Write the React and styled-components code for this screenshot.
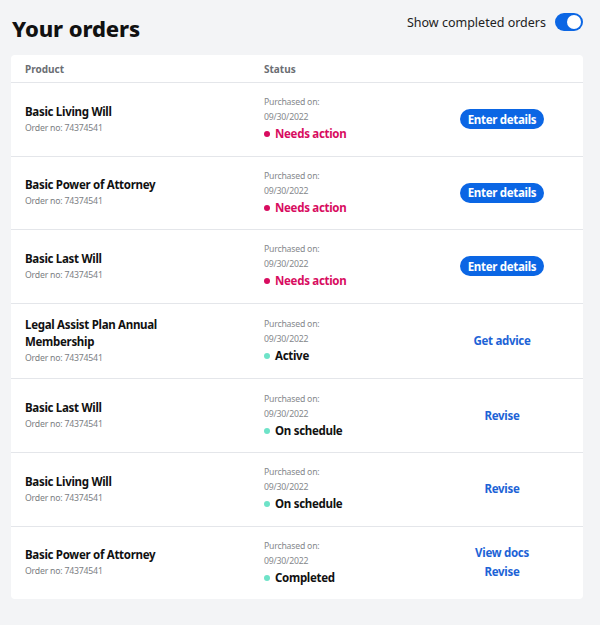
import styled, { createGlobalStyle } from "styled-components"

const orders = [
    { name: "Basic Living Will", status: "action", actions: ["Enter details"] },
    { name: "Basic Power of Attorney", status: "action", actions: ["Enter details"] },
    { name: "Basic Last Will", status: "action", actions: ["Enter details"] },
    { name: "Legal Assist Plan Annual Membership", status: "active", actions: ["Get advice"] },
    { name: "Basic Last Will", status: "schedule", actions: ["Revise"] },
    { name: "Basic Living Will", status: "schedule", actions: ["Revise"] },
    { name: "Basic Power of Attorney", status: "completed", actions: ["View docs", "Revise"] },
]

const statusLabel = {
    action: "Needs action",
    active: "Active",
    schedule: "On schedule",
    completed: "Completed",
}

const App = () => {
    return (
        <Page>
            <GlobalStyle />
            <TopBar>
                <Title>Your orders</Title>
                <ToggleWrap>
                    <ToggleLabel>Show completed orders</ToggleLabel>
                    <Toggle $on />
                </ToggleWrap>
            </TopBar>

            <Card>
                <HeadRow>
                    <HeadCell>Product</HeadCell>
                    <HeadCell>Status</HeadCell>
                    <span />
                </HeadRow>
                {orders.map((o, i) => (
                    <Row key={i}>
                        <ProductCell>
                            <ProductName>{o.name}</ProductName>
                            <OrderNo>Order no: 74374541</OrderNo>
                        </ProductCell>
                        <StatusCell>
                            <Muted>Purchased on:</Muted>
                            <Muted>09/30/2022</Muted>
                            <StatusLine $warn={o.status === "action"}>
                                <Dot $warn={o.status === "action"} />
                                {statusLabel[o.status]}
                            </StatusLine>
                        </StatusCell>
                        <ActionCell>
                            {o.status === "action"
                                ? <PillButton>{o.actions[0]}</PillButton>
                                : o.actions.map((a) => <LinkButton key={a}>{a}</LinkButton>)}
                        </ActionCell>
                    </Row>
                ))}
            </Card>
        </Page>
    )
}

//styling starts----------------------------------------
const Blue = "#0b66e4"
const LinkBlue = "#1d63d6"
const Pink = "#d80c5f"
const Mint = "#6ee3c8"

const GlobalStyle = createGlobalStyle`
body {
    margin: 0;
    background: #f3f4f6;
    font-family: "Noto Sans", "Open Sans", sans-serif;
    color: #111;
}
`

const Page = styled.div`
padding: 13px 17px 25px 11px;
min-height: 625px;
box-sizing: border-box;
`

const TopBar = styled.div`
display: flex;
justify-content: space-between;
align-items: flex-start;
height: 42px;
`

const Title = styled.h1`
margin: 0 0 0 1px;
font-size: 22px;
font-weight: 800;
line-height: 31px;
letter-spacing: -0.1px;
`

const ToggleWrap = styled.div`
display: flex;
align-items: center;
gap: 9px;
height: 18px;
`

const ToggleLabel = styled.span`
font-size: 12.5px;
color: #222;
`

const Toggle = styled.span`
position: relative;
width: 28px;
height: 18px;
border-radius: 9px;
background: ${Blue};
&::after {
    content: "";
    position: absolute;
    top: 2px;
    left: ${p => (p.$on ? "12px" : "2px")};
    width: 14px;
    height: 14px;
    border-radius: 50%;
    background: white;
}
`

const Card = styled.div`
background: white;
border-radius: 4px;
overflow: hidden;
`

const cols = `
display: grid;
grid-template-columns: 239px 171px 1fr;
padding: 0 14px;
`

const HeadRow = styled.div`
${cols}
height: 27px;
align-items: center;
border-bottom: 1px solid #e4e6ea;
`

const HeadCell = styled.div`
font-size: 10px;
font-weight: 700;
color: #6b6e73;
`

const Row = styled.div`
${cols}
padding-top: 12.3px;
padding-bottom: 12.3px;
align-items: center;
border-bottom: 1px solid #e4e6ea;
&:last-child {
    border-bottom: none;
}
`

const ProductCell = styled.div`
display: flex;
flex-direction: column;
max-width: 165px;
`

const ProductName = styled.div`
font-size: 11.5px;
font-weight: 700;
line-height: 17px;
letter-spacing: -0.3px;
`

const OrderNo = styled.div`
font-size: 8.7px;
line-height: 16px;
color: #7b7e83;
letter-spacing: -0.2px;
`

const StatusCell = styled.div`
display: flex;
flex-direction: column;
`

const Muted = styled.div`
font-size: 8.7px;
line-height: 15px;
color: #85888c;
letter-spacing: -0.2px;
`

const StatusLine = styled.div`
display: flex;
align-items: center;
gap: 5px;
font-size: 11.5px;
font-weight: 700;
line-height: 18px;
letter-spacing: -0.3px;
color: ${p => (p.$warn ? Pink : "#111")};
`

const Dot = styled.span`
width: 6px;
height: 6px;
border-radius: 50%;
background: ${p => (p.$warn ? Pink : Mint)};
`

const ActionCell = styled.div`
display: flex;
flex-direction: column;
align-items: center;
gap: 1px;
`

const PillButton = styled.button`
border: none;
background: ${Blue};
color: white;
font-family: inherit;
font-size: 11.5px;
font-weight: 700;
letter-spacing: -0.3px;
height: 20px;
padding: 0 8px;
border-radius: 10px;
`

const LinkButton = styled.button`
border: none;
background: none;
padding: 0;
color: ${LinkBlue};
font-family: inherit;
font-size: 11.5px;
font-weight: 700;
letter-spacing: -0.3px;
line-height: 18px;
`

export default App
